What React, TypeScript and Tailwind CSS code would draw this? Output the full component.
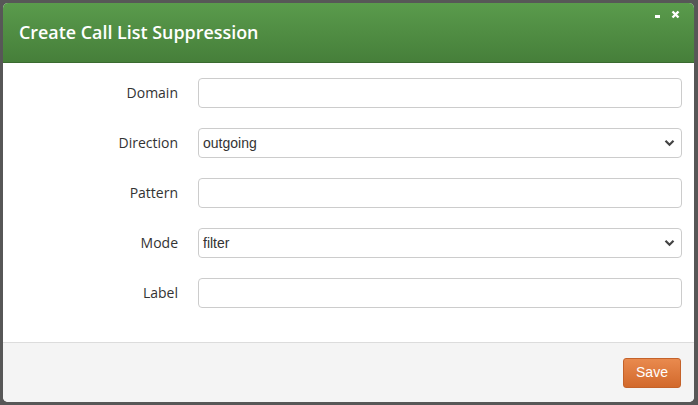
import React from 'react';

const fields = [
  { label: 'Domain', kind: 'input' as const },
  { label: 'Direction', kind: 'select' as const, value: 'outgoing' },
  { label: 'Pattern', kind: 'input' as const },
  { label: 'Mode', kind: 'select' as const, value: 'filter' },
  { label: 'Label', kind: 'input' as const },
];

const Chevron = () => (
  <svg width="11" height="8" viewBox="0 0 11 8" className="text-[#444]">
    <path d="M1.5 1.8 L5.5 5.8 L9.5 1.8" fill="none" stroke="currentColor" strokeWidth="2.2" />
  </svg>
);

const App: React.FC = () => {
  return (
    <div className="w-[698px] h-[405px] bg-[#575757] p-[3px] pr-[4px] pb-[3px]" style={{ fontFamily: '"Open Sans", sans-serif' }}>
      <div className="flex flex-col h-full bg-white rounded-[5px] overflow-hidden">
        {/* Header */}
        <div className="relative h-[60px] shrink-0 flex items-center pl-[16px] bg-gradient-to-b from-[#5a9b4c] to-[#467f3a] border-b border-[#3a6a30]">
          <h1 className="text-white text-[17.9px] font-semibold leading-none">Create Call List Suppression</h1>
          <div className="absolute top-[7px] right-[14px] flex items-center gap-[11px] text-white">
            <span className="block w-[5px] h-[3px] bg-white mt-[3px]" />
            <svg width="9" height="9" viewBox="0 0 9 9">
              <path d="M1.5 1.5 L7.5 7.5 M7.5 1.5 L1.5 7.5" stroke="white" strokeWidth="2.4" />
            </svg>
          </div>
        </div>

        {/* Body */}
        <div className="flex-1 flex flex-col gap-[20px] pt-[15px]">
          {fields.map((f) => (
            <div key={f.label} className="flex items-center h-[30px]">
              <label className="w-[175px] text-right text-[14px] text-[#333] -mt-[2px]">{f.label}</label>
              <div className="ml-[20px] w-[484px] h-[30px] border border-[#ccc] rounded-[4px] bg-white flex items-center justify-between pl-[4px] pr-[6px]">
                {f.kind === 'select' ? (
                  <>
                    <span className="text-[14px] text-[#333]" style={{ fontFamily: '"Liberation Sans", Arial, sans-serif' }}>{f.value}</span>
                    <Chevron />
                  </>
                ) : null}
              </div>
            </div>
          ))}
        </div>

        {/* Footer */}
        <div className="h-[60px] shrink-0 bg-[#f4f4f4] border-t border-[#dcdcdc] flex items-center justify-end pr-[13px]">
          <button
            className="h-[30px] w-[58px] rounded-[3px] border border-[#c4622a] bg-gradient-to-b from-[#e98a4e] to-[#d2692b] text-white text-[14px]"
            style={{ fontFamily: '"Liberation Sans", Arial, sans-serif' }}
          >
            Save
          </button>
        </div>
      </div>
    </div>
  );
};

export default App;
